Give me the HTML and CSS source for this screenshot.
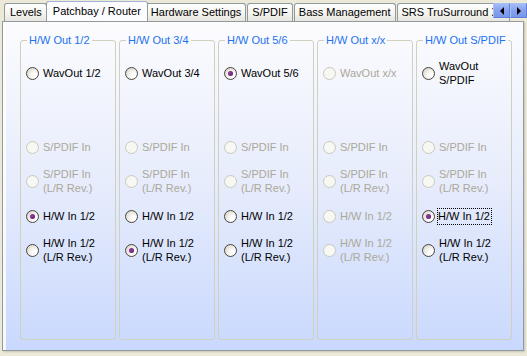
FILE: index.html
```html
<!DOCTYPE html>
<html lang="en">

<head>
  <meta charset="UTF-8">
  <title>Patchbay / Router</title>
  <link rel="stylesheet" href="styles.css">
</head>

<body>
  <div class="dialog">
    <div class="tabstrip">
      <div class="tab tab-first">Levels</div>
      <div class="tab tab-active">Patchbay / Router</div>
      <div class="tab">Hardware Settings</div>
      <div class="tab">S/PDIF</div>
      <div class="tab">Bass Management</div>
      <div class="tab">SRS TruSurround XT</div>
      <div class="tab-scroll">
        <span class="scroll-btn"><span class="arrow-left"></span></span>
        <span class="scroll-btn"><span class="arrow-right"></span></span>
      </div>
    </div>

    <div class="panel">
      <fieldset class="group">
        <legend>H/W Out 1/2</legend>
        <div class="option first"><span class="radio"></span><span class="label">WavOut 1/2</span></div>
        <div class="option second disabled"><span class="radio"></span><span class="label">S/PDIF In</span></div>
        <div class="option disabled"><span class="radio"></span><span class="label">S/PDIF In<br>(L/R Rev.)</span></div>
        <div class="option fourth"><span class="radio checked"></span><span class="label">H/W In 1/2</span></div>
        <div class="option"><span class="radio"></span><span class="label">H/W In 1/2<br>(L/R Rev.)</span></div>
      </fieldset>

      <fieldset class="group">
        <legend>H/W Out 3/4</legend>
        <div class="option first"><span class="radio"></span><span class="label">WavOut 3/4</span></div>
        <div class="option second disabled"><span class="radio"></span><span class="label">S/PDIF In</span></div>
        <div class="option disabled"><span class="radio"></span><span class="label">S/PDIF In<br>(L/R Rev.)</span></div>
        <div class="option fourth"><span class="radio"></span><span class="label">H/W In 1/2</span></div>
        <div class="option"><span class="radio checked"></span><span class="label">H/W In 1/2<br>(L/R Rev.)</span></div>
      </fieldset>

      <fieldset class="group">
        <legend>H/W Out 5/6</legend>
        <div class="option first"><span class="radio checked"></span><span class="label">WavOut 5/6</span></div>
        <div class="option second disabled"><span class="radio"></span><span class="label">S/PDIF In</span></div>
        <div class="option disabled"><span class="radio"></span><span class="label">S/PDIF In<br>(L/R Rev.)</span></div>
        <div class="option fourth"><span class="radio"></span><span class="label">H/W In 1/2</span></div>
        <div class="option"><span class="radio"></span><span class="label">H/W In 1/2<br>(L/R Rev.)</span></div>
      </fieldset>

      <fieldset class="group">
        <legend>H/W Out x/x</legend>
        <div class="option first disabled"><span class="radio"></span><span class="label">WavOut x/x</span></div>
        <div class="option second disabled"><span class="radio"></span><span class="label">S/PDIF In</span></div>
        <div class="option disabled"><span class="radio"></span><span class="label">S/PDIF In<br>(L/R Rev.)</span></div>
        <div class="option fourth disabled"><span class="radio"></span><span class="label">H/W In 1/2</span></div>
        <div class="option disabled"><span class="radio"></span><span class="label">H/W In 1/2<br>(L/R Rev.)</span></div>
      </fieldset>

      <fieldset class="group">
        <legend>H/W Out S/PDIF</legend>
        <div class="option first"><span class="radio"></span><span class="label">WavOut<br>S/PDIF</span></div>
        <div class="option second disabled"><span class="radio"></span><span class="label">S/PDIF In</span></div>
        <div class="option disabled"><span class="radio"></span><span class="label">S/PDIF In<br>(L/R Rev.)</span></div>
        <div class="option fourth"><span class="radio checked"></span><span class="label focused">H/W In 1/2</span></div>
        <div class="option"><span class="radio"></span><span class="label">H/W In 1/2<br>(L/R Rev.)</span></div>
      </fieldset>
    </div>
  </div>
</body>

</html>
```

FILE: styles.css
```css
body {
  margin: 0;
  background-color: #ece9d8;
  font-family: "Liberation Sans", Arial, sans-serif;
  font-size: 11px;
  color: #000;
}

.dialog {
  width: 527px;
  height: 356px;
  overflow: hidden;
}

/* tab row */
.tabstrip {
  position: relative;
  display: flex;
  align-items: flex-end;
  height: 21px;
  padding-left: 4px;
  overflow: hidden;
}

.tab {
  flex-shrink: 0;
  box-sizing: border-box;
  height: 18px;
  margin-right: 1px;
  padding: 0 4px;
  line-height: 17px;
  border: 1px solid #919b9c;
  border-bottom: none;
  border-radius: 3px 3px 0 0;
  background: linear-gradient(#ffffff, #f3f3ef 60%, #e6e5de);
  white-space: nowrap;
}

.tab-first {
  padding: 0 4px 0 5px;
}

.tab-active {
  position: relative;
  z-index: 1;
  height: 21px;
  margin: 0 0 -1px -2px;
  padding: 0 6px;
  line-height: 19px;
  border-top-color: #9fb4cf;
  background: #fcfcfe;
}

.tab-active + .tab {
  margin-left: -2px;
}

.tab-scroll {
  position: absolute;
  top: 3px;
  right: 0;
  display: flex;
  z-index: 2;
}

.scroll-btn {
  display: flex;
  align-items: center;
  justify-content: center;
  box-sizing: border-box;
  width: 17px;
  height: 15px;
  border: 1px solid #a9bff3;
  border-right-color: #5f7fd8;
  border-bottom-color: #5f7fd8;
  background: linear-gradient(#a5bcf7, #86a2ef 50%, #7796ea);
}

.arrow-left,
.arrow-right {
  width: 0;
  height: 0;
  border-top: 4px solid transparent;
  border-bottom: 4px solid transparent;
}

.arrow-left {
  border-right: 4px solid #000;
}

.arrow-right {
  border-left: 4px solid #000;
}

/* page body */
.panel {
  box-sizing: border-box;
  display: flex;
  gap: 3px;
  width: 522px;
  height: 330px;
  margin-left: 2px;
  padding: 12px 0 0 17px;
  border: 1px solid #919b9c;
  background: linear-gradient(#fcfcfe, #e6ecfc 50%, #c9d8fd);
  box-shadow: inset 3px 0 0 rgba(255, 255, 255, 0.8), 1px 1px 0 #d2d0c4, 2px 2px 0 #e2dfd2;
}

.group {
  box-sizing: border-box;
  display: flex;
  flex-direction: column;
  width: 96px;
  height: 306px;
  margin: 0;
  padding: 0 0 0 5px;
  border: 1px solid #d0d0bf;
  border-radius: 3px;
}

.group legend {
  margin-left: 1px;
  padding: 0 2px;
  line-height: 13px;
  color: #1b72ee;
  white-space: nowrap;
}

.option {
  display: flex;
  align-items: center;
  gap: 4px;
  height: 34px;
}

.option.first {
  margin-top: 9px;
}

.option.second {
  margin-top: 40px;
}

.option.fourth {
  margin-top: 1px;
}

.label {
  line-height: 14px;
  white-space: nowrap;
}

.focused {
  margin-left: -1px;
  padding: 0 1px 1px 0;
  outline: 1px dotted #000;
}

.disabled .label {
  color: #aca899;
}

.radio {
  position: relative;
  flex-shrink: 0;
  box-sizing: border-box;
  width: 13px;
  height: 13px;
  border: 1px solid #4a463e;
  border-radius: 50%;
  background: radial-gradient(circle at 70% 70%, #ffffff 20%, #e9e7df 60%, #c6c2b6);
}

.radio.checked::after {
  content: "";
  position: absolute;
  top: 3px;
  left: 3px;
  width: 5px;
  height: 5px;
  border-radius: 50%;
  background: radial-gradient(circle at 40% 40%, #9a3fa8, #4e0e5c);
}

.disabled .radio {
  border-color: #cac8bb;
  background: #f7f7f3;
}
```
